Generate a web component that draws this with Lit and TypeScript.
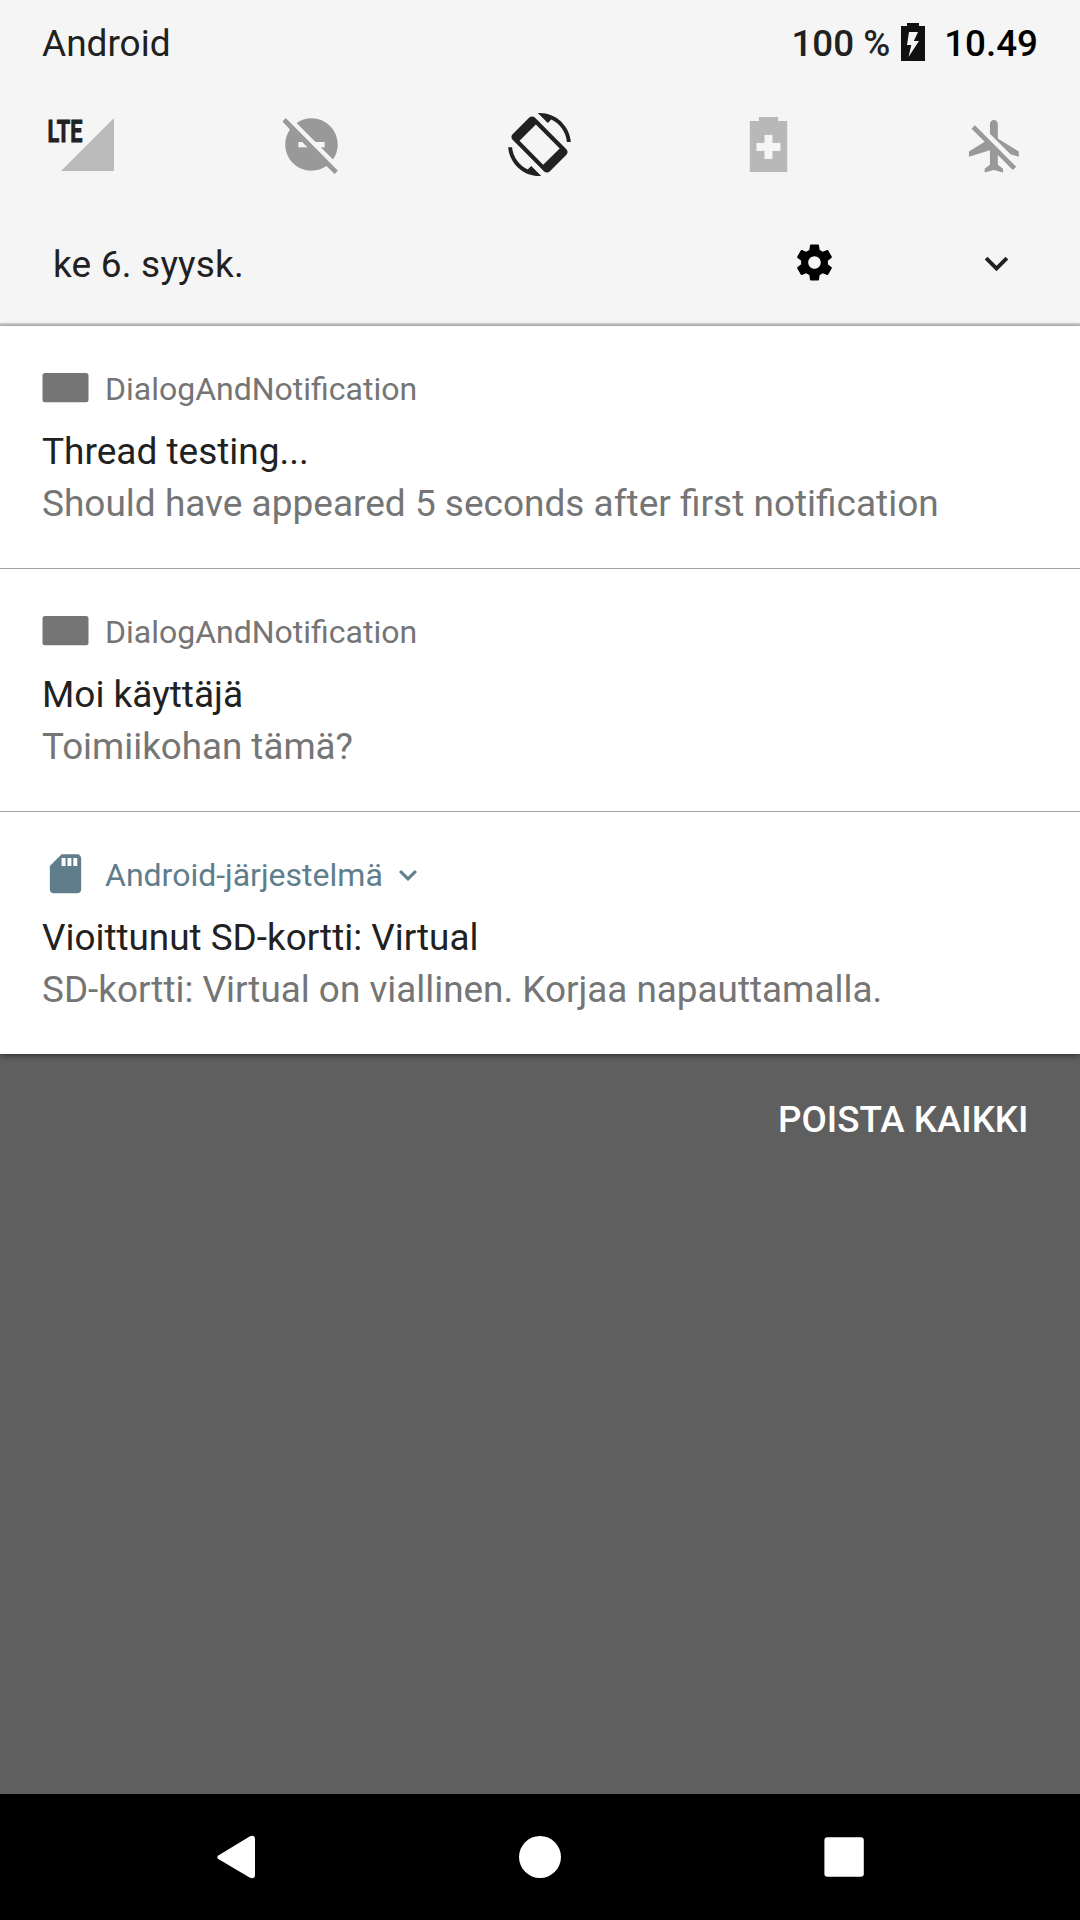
import { LitElement, html, svg, css, nothing } from "lit";
import { customElement, property } from "lit/decorators.js";
import { classMap } from "lit/directives/class-map.js";

interface Notice {
  app: string;
  system: boolean;
  title: string;
  body: string;
}

const notices: Notice[] = [
  {
    app: "DialogAndNotification",
    system: false,
    title: "Thread testing...",
    body: "Should have appeared 5 seconds after first notification",
  },
  {
    app: "DialogAndNotification",
    system: false,
    title: "Moi käyttäjä",
    body: "Toimiikohan tämä?",
  },
  {
    app: "Android-järjestelmä",
    system: true,
    title: "Vioittunut SD-kortti: Virtual",
    body: "SD-kortti: Virtual on viallinen. Korjaa napauttamalla.",
  },
];

const chevron = svg`<path d="M16.59 8.59L12 13.17 7.41 8.59 6 10l6 6 6-6z" />`;

@customElement("notice-card")
export class NoticeCard extends LitElement {
  @property({ attribute: false }) notice!: Notice;

  static styles = css`
    :host {
      display: block;
      box-sizing: border-box;
      height: 242px;
      padding: 39px 42px 0;
      background: #fff;
      color: #757575;
    }
    .head {
      display: flex;
      align-items: center;
      height: 48px;
      margin-bottom: 13px;
      font-size: 32px;
      line-height: 48px;
    }
    .head.system {
      color: #607d8b;
    }
    .mark {
      display: flex;
      width: 47px;
      height: 47px;
      margin-right: 16px;
      fill: currentColor;
    }
    .more {
      width: 36px;
      height: 36px;
      margin: 0 0 1px 7px;
      fill: currentColor;
    }
    .title,
    .body {
      font-size: 37px;
      line-height: 52px;
      white-space: nowrap;
    }
    .title {
      color: #212121;
    }
    .body.short {
      font-size: 36.75px;
    }
    .system ~ .title,
    .system ~ .body {
      font-size: 36.86px;
    }
  `;

  render() {
    const { app, system, title, body } = this.notice;
    return html`
      <div class=${classMap({ head: true, system })}>
        ${system
          ? html`<svg class="mark" viewBox="0 0.9 24 24">
              <path
                d="M18 2h-8L4.02 8 4 20c0 1.1.9 2 2 2h12c1.1 0 2-.9 2-2V4c0-1.1-.9-2-2-2zm-6 6h-2V4h2v4zm3 0h-2V4h2v4zm3 0h-2V4h2v4z"
              />
            </svg>`
          : html`<svg class="mark" viewBox="0 0 47 47">
              <rect x="0.5" y="7" width="46" height="29.2" rx="2.5" />
            </svg>`}
        <span>${app}</span>
        ${system
          ? html`<svg class="more" viewBox="0 0 24 24">${chevron}</svg>`
          : nothing}
      </div>
      <div class="title">${title}</div>
      <div class=${classMap({ body: true, short: body.length < 24 })}>${body}</div>
    `;
  }
}

@customElement("quick-settings")
export class QuickSettings extends LitElement {
  static styles = css`
    :host {
      display: flex;
      flex-direction: column;
      box-sizing: border-box;
      height: 326px;
      background: #f5f5f5;
      border-bottom: 1px solid #b8b8b8;
      box-shadow: inset 0 -2px 0 #cbcbcb;
      color: #212121;
      font-size: 36.75px;
    }
    .status {
      display: flex;
      align-items: center;
      height: 87px;
      line-height: 87px;
      padding: 0 42px;
    }
    .grow {
      flex: 1;
    }
    .carrier {
      font-size: 37px;
    }
    .percent {
      font-weight: 500;
    }
    .battery {
      width: 24px;
      height: 38px;
      margin: 0 19.5px 3px 10.5px;
    }
    .clock {
      color: #000;
      font-weight: 500;
    }
    .tiles {
      display: flex;
      gap: 165.2px;
      padding: 26px 0 0 52px;
    }
    .tile {
      width: 63px;
      height: 63px;
      flex: none;
      overflow: visible;
      fill: #999;
    }
    .tile.active {
      fill: #212121;
    }
    .tile.soft {
      fill: #b8b8b8;
    }
    .net {
      font: 700 31.6px Roboto, sans-serif;
      fill: #212121;
      stroke: #212121;
      stroke-width: 0.9px;
    }
    .foot {
      display: flex;
      align-items: center;
      height: 88px;
      margin-top: 45px;
      padding: 0 60.5px 0 53px;
      line-height: 88px;
    }
    .date {
      font-size: 37px;
      letter-spacing: 0.2px;
    }
    .gear {
      width: 43px;
      height: 43px;
      margin: 0 137px 5px 0;
      fill: #000;
    }
    .expand {
      width: 47px;
      height: 47px;
      margin-bottom: 3px;
      fill: #212121;
    }
  `;

  render() {
    return html`
      <div class="status">
        <span class="carrier">Android</span>
        <span class="grow"></span>
        <span class="percent">100 %</span>
        <svg class="battery" viewBox="0 0 24 38">
          <path
            fill="#111"
            fill-rule="evenodd"
            d="M6 0h12v3h6v35H0V3h6zM8 9l-2 13h4.3L7.5 34 18 18h-5.2L17 9z"
          />
        </svg>
        <span class="clock">10.49</span>
      </div>
      <div class="tiles">
        <svg class="tile" viewBox="0 0 63 63">
          <path fill="#bababa" d="M62 5v53H9z" />
          <text
            class="net"
            x="-4.6"
            y="28.8"
            textLength="35"
            lengthAdjust="spacingAndGlyphs"
          >LTE</text>
        </svg>
        <svg class="tile" viewBox="0 0 24 24">
          <path
            d="M17 11v2h-1.46l4.68 4.68C21.34 16.07 22 14.11 22 12c0-5.52-4.48-10-10-10-2.11 0-4.07.66-5.68 1.78L13.54 11H17zM2.2 1.95L.93 3.22l2.85 3.1C2.66 7.93 2 9.89 2 12c0 5.52 4.48 10 10 10 2.11 0 4.07-.66 5.68-1.78L20.8 23.27l1.27-1.27zM7 13v-2h1.46l2 2H7z"
          />
        </svg>
        <svg class="tile active" viewBox="0 0 24 24">
          <path
            fill-rule="evenodd"
            d="M16.48 2.52c3.27 1.55 5.61 4.72 5.97 8.48h1.5C23.44 4.84 18.29 0 12 0l-.66.03 3.81 3.81 1.33-1.32zM10.23 1.75c-.59-.59-1.54-.59-2.12 0L1.75 8.11c-.59.59-.59 1.54 0 2.12l12.02 12.02c.59.59 1.54.59 2.12 0l6.36-6.36c.59-.59.59-1.54 0-2.12zM10.6 4.4L19.7 13.5 13.4 19.7 4.4 10.6zM7.52 21.48C4.25 19.94 1.91 16.76 1.55 13H.05C.56 19.16 5.71 24 12 24l.66-.03-3.81-3.81-1.33 1.32z"
          />
        </svg>
        <svg class="tile soft" viewBox="0 0 63 63">
          <path
            fill-rule="evenodd"
            d="M22 4h19v4h9.2v51H12.8V8H22zM27.5 22v8h-8v8h8v8h8v-8h8v-8h-8v-8z"
          />
        </svg>
        <svg class="tile" viewBox="0.5 -0.7 24 24">
          <path
            d="M13 9V3.5c0-.83-.67-1.5-1.5-1.5S10 2.67 10 3.5v3.68l7.83 7.83L21 16v-2l-8-5zM3 5.27l4.99 4.99L2 14v2l8-2.5V19l-2 1.5V22l3.5-1 3.5 1v-1.5L13 19v-3.73L18.73 21 20 19.73 4.27 4 3 5.27z"
          />
        </svg>
      </div>
      <div class="foot">
        <span class="date">ke 6. syysk.</span>
        <span class="grow"></span>
        <svg class="gear" viewBox="0 0 24 24">
          <path
            d="M19.43 12.98c.04-.32.07-.64.07-.98s-.03-.66-.07-.98l2.11-1.65c.19-.15.24-.42.12-.64l-2-3.46c-.12-.22-.39-.3-.61-.22l-2.49 1c-.52-.4-1.08-.73-1.69-.98l-.38-2.65C14.46 2.18 14.25 2 14 2h-4c-.25 0-.46.18-.49.42l-.38 2.65c-.61.25-1.17.59-1.69.98l-2.49-1c-.23-.09-.49 0-.61.22l-2 3.46c-.13.22-.07.49.12.64l2.11 1.65c-.04.32-.07.65-.07.98s.03.66.07.98l-2.11 1.65c-.19.15-.24.42-.12.64l2 3.46c.12.22.39.3.61.22l2.49-1c.52.4 1.08.73 1.69.98l.38 2.65c.03.24.24.42.49.42h4c.25 0 .46-.18.49-.42l.38-2.65c.61-.25 1.17-.59 1.69-.98l2.49 1c.23.09.49 0 .61-.22l2-3.46c.12-.22.07-.49-.12-.64l-2.11-1.65zM12 15.5c-1.93 0-3.5-1.57-3.5-3.5s1.57-3.5 3.5-3.5 3.5 1.57 3.5 3.5-1.57 3.5-3.5 3.5z"
          />
        </svg>
        <svg class="expand" viewBox="0 0 24 24">${chevron}</svg>
      </div>
    `;
  }
}

@customElement("nav-bar")
export class NavBar extends LitElement {
  static styles = css`
    :host {
      display: flex;
      justify-content: center;
      align-items: center;
      gap: 240px;
      height: 126px;
      background: #000;
    }
    .key {
      width: 64px;
      height: 64px;
      fill: #fff;
    }
  `;

  render() {
    return html`
      <svg class="key" viewBox="0 0 64 64">
        <path
          d="M14.7 30.2L45.6 11.5q5-2.2 5.4 2.5v36q-.4 4.7-5.4 2.5L14.7 34.2q-3-2 0-4z"
        />
      </svg>
      <svg class="key" viewBox="0 0 64 64">
        <circle cx="32" cy="32" r="21" />
      </svg>
      <svg class="key" viewBox="0 0 64 64">
        <rect x="12.4" y="12.3" width="39.4" height="39.4" rx="3" />
      </svg>
    `;
  }
}

@customElement("app-root")
export class AppRoot extends LitElement {
  static styles = css`
    :host {
      display: flex;
      flex-direction: column;
      width: 1080px;
      height: 1920px;
      overflow: hidden;
      background: #5f5f5f;
      font-family: Roboto, sans-serif;
    }
    .list {
      display: flex;
      flex-direction: column;
      gap: 1px;
      background: #a3a3a3;
      box-shadow: 0 2px 6px rgba(0, 0, 0, 0.45);
    }
    .rest {
      display: flex;
      flex: 1;
      justify-content: flex-end;
      padding: 22px 51.5px 0 0;
    }
    .clear {
      color: #fff;
      font-size: 36.75px;
      font-weight: 500;
      line-height: 87px;
    }
  `;

  render() {
    return html`
      <quick-settings></quick-settings>
      <div class="list">
        ${notices.map((n) => html`<notice-card .notice=${n}></notice-card>`)}
      </div>
      <div class="rest"><span class="clear">POISTA KAIKKI</span></div>
      <nav-bar></nav-bar>
    `;
  }
}
